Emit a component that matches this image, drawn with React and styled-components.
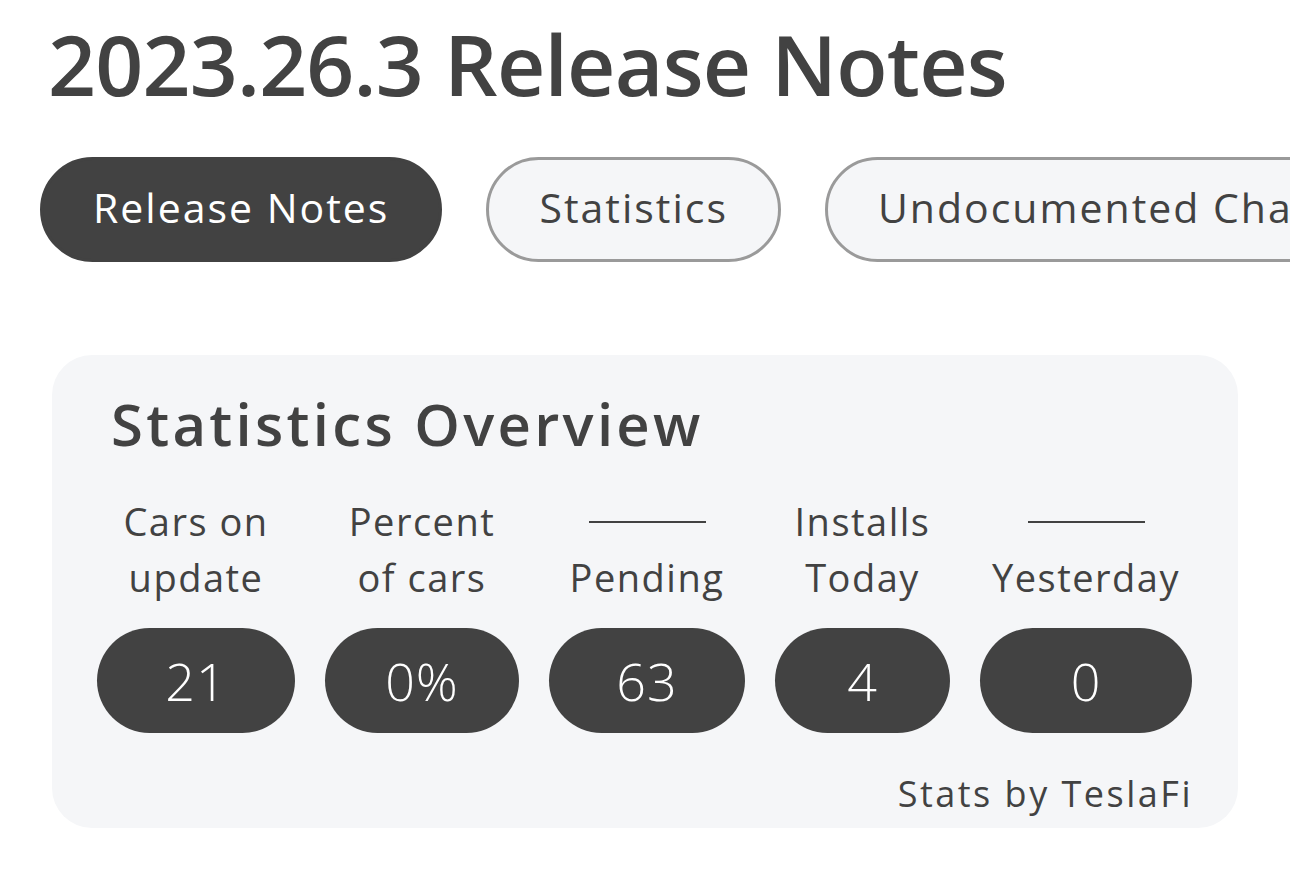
import React from 'react';
import styled, { createGlobalStyle } from 'styled-components';

const GlobalStyle = createGlobalStyle`
  html, body {
    margin: 0;
    padding: 0;
    background: #ffffff;
    overflow: hidden;
  }
  body {
    font-family: 'Open Sans', 'Noto Sans', sans-serif;
    color: #424242;
  }
`;

const Page = styled.div`
  width: 1290px;
  overflow: hidden;
  padding-top: 14px;
`;

const Title = styled.h1`
  margin: 0 0 0 48px;
  font-size: 84px;
  font-weight: 600;
  line-height: 100px;
  letter-spacing: -0.8px;
  color: #424242;
  white-space: nowrap;
`;

const Tabs = styled.div`
  display: flex;
  gap: 44px;
  margin: 43px 0 0 40px;
  white-space: nowrap;
`;

const Tab = styled.div`
  flex: none;
  height: 105px;
  box-sizing: border-box;
  display: flex;
  align-items: center;
  padding: 0 50px 5px;
  border-radius: 53px;
  font-size: 41px;
  letter-spacing: 2px;
  border: 3px solid ${(props) => (props.active ? '#424242' : '#9a9a9a')};
  background: ${(props) => (props.active ? '#424242' : '#f5f6f8')};
  color: ${(props) => (props.active ? '#ffffff' : '#424242')};
`;

const Card = styled.section`
  width: 1186px;
  box-sizing: border-box;
  margin: 93px 0 0 52px;
  padding: 34px 45px 0 45px;
  background: #f5f6f8;
  border-radius: 40px;
`;

const CardTitle = styled.h2`
  margin: 0 0 0 14px;
  font-size: 58px;
  font-weight: 600;
  line-height: 70px;
  letter-spacing: 3.3px;
  color: #424242;
`;

const Grid = styled.div`
  display: grid;
  grid-template-columns: 198px 194px 196px 175px 212px;
  column-gap: 30px;
  margin-top: 34px;
`;

const Label = styled.div`
  display: flex;
  flex-direction: column;
  align-items: center;
  font-size: 38px;
  line-height: 56px;
  letter-spacing: 1.5px;
  color: #424242;
  white-space: nowrap;
`;

const Dash = styled.span`
  display: block;
  width: 117px;
  height: 28px;
  border-bottom: 2px solid #424242;
  margin-bottom: 26px;
`;

const Value = styled.div`
  margin-top: 23px;
  height: 105px;
  border-radius: 53px;
  background: #424242;
  color: #ffffff;
  display: flex;
  align-items: center;
  justify-content: center;
  font-size: 52px;
  font-weight: 300;
  letter-spacing: 1px;
`;

const Credit = styled.div`
  text-align: right;
  font-size: 36px;
  line-height: 69px;
  margin-top: 26px;
  letter-spacing: 2.5px;
  color: #424242;
`;

const stats = [
  { top: 'Cars on', bottom: 'update', value: '21' },
  { top: 'Percent', bottom: 'of cars', value: '0%' },
  { top: null, bottom: 'Pending', value: '63' },
  { top: 'Installs', bottom: 'Today', value: '4' },
  { top: null, bottom: 'Yesterday', value: '0' },
];

export default function App() {
  return (
    <>
      <GlobalStyle />
      <Page>
        <Title>2023.26.3 Release Notes</Title>
        <Tabs>
          <Tab active>Release Notes</Tab>
          <Tab>Statistics</Tab>
          <Tab>Undocumented Changes</Tab>
        </Tabs>
        <Card>
          <CardTitle>Statistics Overview</CardTitle>
          <Grid>
            {stats.map((s) => (
              <div key={s.bottom}>
                <Label>
                  {s.top ? <span>{s.top}</span> : <Dash />}
                  <span>{s.bottom}</span>
                </Label>
                <Value>{s.value}</Value>
              </div>
            ))}
          </Grid>
          <Credit>Stats by TeslaFi</Credit>
        </Card>
      </Page>
    </>
  );
}
